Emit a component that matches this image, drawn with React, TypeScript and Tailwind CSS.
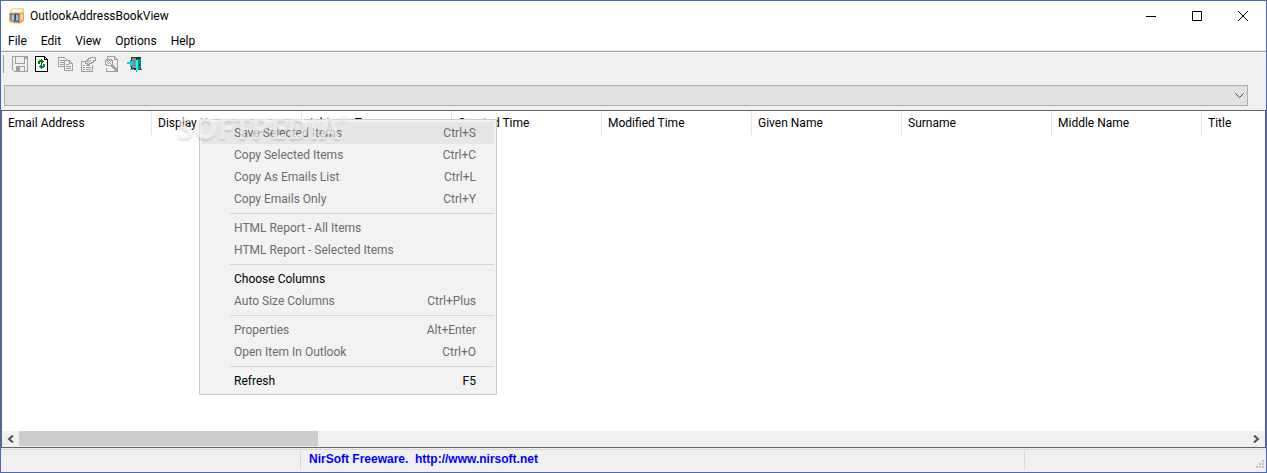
import type { ReactNode } from "react";

type MenuEntry = { label: string; keys?: string; enabled?: boolean; active?: boolean };

const menus = ["File", "Edit", "View", "Options", "Help"];

const columns = [
    "Email Address",
    "Display Name",
    "Address Type",
    "Created Time",
    "Modified Time",
    "Given Name",
    "Surname",
    "Middle Name",
    "Title",
];

const contextMenu: MenuEntry[][] = [
    [
        { label: "Save Selected Items", keys: "Ctrl+S", active: true },
        { label: "Copy Selected Items", keys: "Ctrl+C" },
        { label: "Copy As Emails List", keys: "Ctrl+L" },
        { label: "Copy Emails Only", keys: "Ctrl+Y" },
    ],
    [{ label: "HTML Report - All Items" }, { label: "HTML Report - Selected Items" }],
    [
        { label: "Choose Columns", enabled: true },
        { label: "Auto Size Columns", keys: "Ctrl+Plus" },
    ],
    [
        { label: "Properties", keys: "Alt+Enter" },
        { label: "Open Item In Outlook", keys: "Ctrl+O" },
    ],
    [{ label: "Refresh", keys: "F5", enabled: true }],
];

function Icon({ children }: { children: ReactNode }) {
    return (
        <svg width="16" height="16" viewBox="0 0 16 16" fill="none" shapeRendering="crispEdges" aria-hidden="true">
            {children}
        </svg>
    );
}

function AppIcon() {
    return (
        <svg width="16" height="16" viewBox="0 0 16 16" aria-hidden="true">
            <path d="M1 2 4 0h11v4l-3 2H1z" fill="#f3d6a2" />
            <path d="M3 1.500h10V4H3z" fill="#fff6e6" />
            <path d="M0 5h2v8l3 2H2l-2-2z" fill="#e0a860" />
            <path d="M10 5l5-1v9l-4 2.500H5L3 14h8z" fill="#eeb04c" />
            <path d="m1.500 5 4.500 1v8.500l-4.500-2z" fill="#56657a" />
            <path d="m2.500 6.500 2.500.5v6l-2.500-1z" fill="#b9c7d8" />
            <path d="m6 5 4.500 1v8.500L6 13.500z" fill="#3f4c60" />
            <path d="m7 6.500 2.500.5v6L7 12.500z" fill="#aab9cc" />
            <path d="m11.500 7 2-1v5l-2 1z" fill="#fbe3ab" />
        </svg>
    );
}

const tools = [
    {
        name: "Save",
        art: (
            <Icon>
                <path d="M.5.5h15v15h-13l-2-2z M3.5.5v7h9v-7 M4.5 15v-5h8v5" stroke="#a0a0a0" />
                <path d="M5 11h3v4H5z M13 1h2v2h-2z" fill="#a0a0a0" />
            </Icon>
        ),
    },
    {
        name: "Refresh",
        art: (
            <Icon>
                <path d="M.5.5h9l3 3v12H.5z" fill="#fff" stroke="#000" />
                <path d="M9.500.5v3h3" stroke="#000" />
                <path d="M3 8V5h1V4h2V3h1v1h1v1h1v1H8v1H7v1H6V6H5v2z" fill="#008000" />
                <path d="M10 8v3H9v1H7v1H6v-1H5v-1H4v-1h1V9h1V8h1v2h1V8z" fill="#008060" />
            </Icon>
        ),
    },
    {
        name: "Copy",
        art: (
            <Icon>
                <path d="M.5 1.5h6l3 3v6h-9z M2 4.5h4 M2 6.5h4 M2 8.5h4" stroke="#a0a0a0" />
                <path d="M6.5 4.5h5l3 3v7h-8z" fill="#f0f0f0" stroke="#a0a0a0" />
                <path d="M8 8.5h3 M8 10.5h5 M8 12.5h5 M11.5 5v2.500h3" stroke="#a0a0a0" />
            </Icon>
        ),
    },
    {
        name: "Properties",
        art: (
            <Icon>
                <path d="M4 5.500H.5v10h11V9" stroke="#a0a0a0" />
                <path d="M2 9.5h2 M5 9.5h4 M2 11.500h2 M5 11.500h5 M2 13.500h2 M5 13.500h5" stroke="#a0a0a0" />
                <path d="M4.500 5.500h1v-1h1v-1h1v-1h2v-1h5v3h-2v2h-2v1h-2v1h-2v-1h-2z" stroke="#a0a0a0" />
                <path d="M6 5h1v1H6z M7 4h1v1H7z M8 5h1v1H8z M9 4h1v1H9z M7 6h1v1H7z" fill="#a0a0a0" />
            </Icon>
        ),
    },
    {
        name: "Find",
        art: (
            <Icon>
                <path d="M3.500 3V.5h7l3 3v12h-11v-4 M10.500.5v3h3" stroke="#a0a0a0" />
                <path d="M2.500 3.500h5v1h1v4h-1v1h-5v-1h-1v-4h1z" stroke="#a0a0a0" />
                <path d="M3 4h1v1H3z M5 4h1v1H5z M4 5h1v1H4z M6 5h1v1H6z M3 6h1v1H3z M5 6h1v1H5z M4 7h1v1H4z M6 7h1v1H6z" fill="#a0a0a0" />
                <path d="M7 8h2v1h1v1h1v1h1v1h1v3h-2v-1h-1v-1H9v-1H8v-1H7z" fill="#a0a0a0" />
            </Icon>
        ),
    },
    {
        name: "Exit",
        art: (
            <Icon>
                <path d="M4 1h10v12h1v1H3v-1h1z" fill="#303030" />
                <path d="M5 2h4v10H5z" fill="#8c8c8c" />
                <path d="M3 13h4v1H3z" fill="#a0a0a0" />
                <path d="m14 2-5 2v12l5-3z" fill="#008c8c" />
                <path d="M9 4h2v11H9z" fill="#00ffff" />
                <path d="M12 8h1v2h-1z" fill="#003c3c" />
                <path d="M0 6h3V4h1v1h1v1h1v1h1v1H6v1H5v1H4v1H3V8H0z" fill="#00d8e8" />
            </Icon>
        ),
    },
];

function ContextMenu() {
    return (
        <div role="menu" className="absolute left-[198px] top-[118px] w-[298px] border border-[#ccc] bg-[#f2f2f2] p-0.5 text-[#6d6d6d]">
            {contextMenu.map((group, i) => (
                <div key={i}>
                    {i > 0 && <div role="separator" className="my-[3px] ml-7 h-px bg-[#d7d7d7]" />}
                    {group.map((item) => (
                        <button
                            key={item.label}
                            role="menuitem"
                            disabled={!item.enabled}
                            className={`flex h-[22px] w-full items-center justify-between pl-8 pr-[18px] ${item.active ? "bg-[#e6e6e6]" : ""} ${item.enabled ? "text-black" : ""}`}
                        >
                            <span>{item.label}</span>
                            <span>{item.keys}</span>
                        </button>
                    ))}
                </div>
            ))}
        </div>
    );
}

export default function App() {
    return (
        <div className="relative flex min-h-screen flex-col overflow-hidden border border-[#4769b8] bg-[#f0f0f0] font-[Roboto,sans-serif] text-[12px] leading-4 text-black">
            {/* Title bar */}
            <header className="flex h-[29px] items-center bg-white pl-2">
                <AppIcon />
                <h1 className="ml-[5px] flex-1">OutlookAddressBookView</h1>
                <button aria-label="Minimize" className="flex h-full w-[46px] items-center justify-center">
                    <svg width="10" height="10" shapeRendering="crispEdges"><path d="M0 5h10v1H0z" /></svg>
                </button>
                <button aria-label="Maximize" className="flex h-full w-[46px] items-center justify-center">
                    <svg width="10" height="10" fill="none" stroke="#000"><path d="M.5.5h9v9h-9z" /></svg>
                </button>
                <button aria-label="Close" className="flex h-full w-[46px] items-center justify-center">
                    <svg width="10" height="10" stroke="#000"><path d="m0 0 10 10M10 0 0 10" /></svg>
                </button>
            </header>

            <nav className="flex h-5 items-center bg-white pt-0.5">
                {menus.map((name) => (
                    <button key={name} className="px-[7px]">{name}</button>
                ))}
            </nav>

            {/* Toolbar */}
            <div className="mt-px flex h-[25px] items-center gap-[7px] border-t border-[#a0a0a0] pl-0.5 shadow-[inset_0_1px_0_#fff]">
                <div className="mr-px h-[18px] w-px bg-[#a0a0a0]" />
                {tools.map((tool) => (
                    <button key={tool.name} aria-label={tool.name}>{tool.art}</button>
                ))}
            </div>

            <div className="relative ml-[3px] mr-[18px] mt-[9px]">
                <select aria-label="Address book" className="block h-[21px] w-full appearance-none border border-[#adadad] bg-[#e1e1e1]" />
                <svg className="pointer-events-none absolute right-1 top-2" width="9" height="6" fill="none" stroke="#444"><path d="m.5.5 4 4 4-4" /></svg>
            </div>

            {/* Contact list */}
            <main className="mt-1 flex flex-1 flex-col overflow-hidden border border-[#646464] bg-white">
                <table className="w-full table-fixed border-separate border-spacing-0">
                    <thead>
                        <tr className="h-6">
                            {columns.map((label) => (
                                <th key={label} className="w-[150px] border-r border-[#e5e5e5] p-0 pl-1.5 text-left font-normal">{label}</th>
                            ))}
                        </tr>
                    </thead>
                </table>
                <div className="mt-auto flex h-4 items-start justify-between bg-[#f0f0f0]">
                    <button aria-label="Scroll left" className="flex h-[15px] w-[17px] items-center justify-center">
                        <svg width="7" height="8" fill="none" stroke="#505050" strokeWidth="2"><path d="M6 .5 2 4l4 3.500" /></svg>
                    </button>
                    <div className="h-[15px] flex-1">
                        <div className="h-full w-[299px] bg-[#cdcdcd]" />
                    </div>
                    <button aria-label="Scroll right" className="flex h-[15px] w-[17px] items-center justify-center">
                        <svg width="7" height="8" fill="none" stroke="#505050" strokeWidth="2"><path d="m1 .5 4 3.500-4 3.500" /></svg>
                    </button>
                </div>
            </main>

            {/* Status bar */}
            <footer className="mt-px flex h-[23px] border-t border-[#d7d7d7] pb-0.5 pt-px">
                <div className="w-[300px] border-r border-[#d7d7d7]" />
                <div className="flex-1 border-r border-[#d7d7d7] pl-2">
                    <a href="http://www.nirsoft.net" className="whitespace-pre font-['Liberation_Sans',sans-serif] font-bold text-[#0000ff]">
                        {"NirSoft Freeware.  http://www.nirsoft.net"}
                    </a>
                </div>
                <div className="flex w-[241px] items-end justify-end">
                    <svg width="10" height="10" fill="#bfbfbf" shapeRendering="crispEdges" aria-hidden="true">
                        <path d="M6 0h2v2H6z M3 3h2v2H3z M6 3h2v2H6z M0 6h2v2H0z M3 6h2v2H3z M6 6h2v2H6z" />
                    </svg>
                </div>
            </footer>

            <ContextMenu />

            {/* Watermark */}
            <div className="pointer-events-none absolute left-[176px] top-[109px] flex items-start font-['Open_Sans',sans-serif] font-bold text-white/60 [text-shadow:0_2px_2px_rgb(0_0_0/0.12)]">
                <span className="text-[30px] leading-9">SOFTPEDIA</span>
                <span className="text-[10px]">®</span>
            </div>
        </div>
    );
}
